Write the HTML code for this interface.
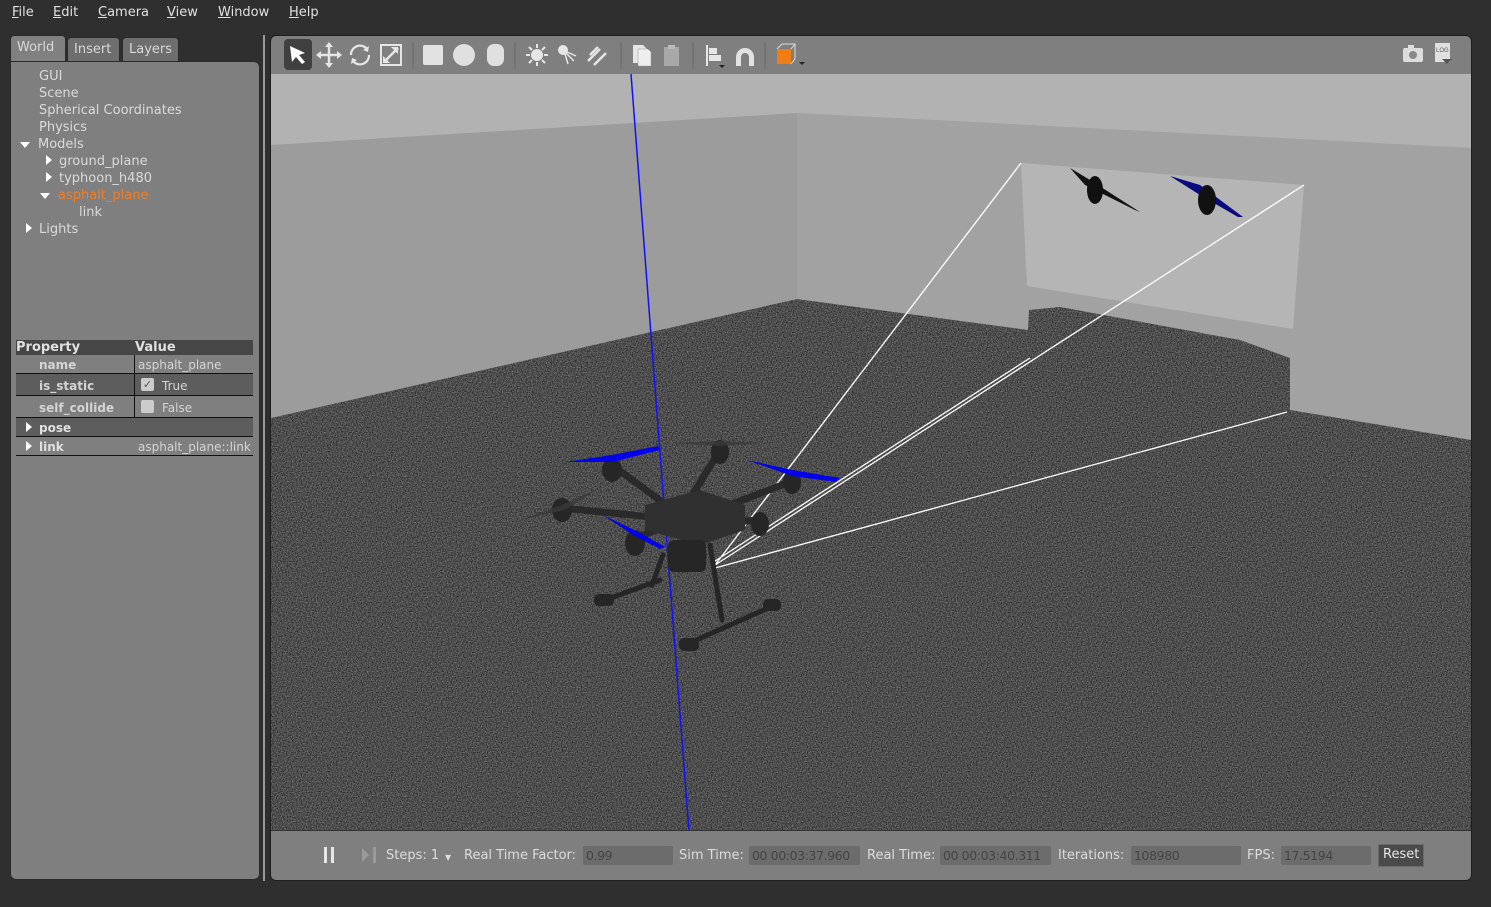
<!DOCTYPE html>
<html><head><meta charset="utf-8"><style>
*{margin:0;padding:0;box-sizing:border-box}
body{width:1491px;height:907px;background:#2f2f2f;font-family:"DejaVu Sans","Liberation Sans",sans-serif;font-size:13px;color:#dcdcdc;position:relative;overflow:hidden}
.abs{position:absolute}
.menu span{position:absolute;top:5px;font-size:13px;color:#e0e0e0}
.tab{position:absolute;top:37px;height:24px;border:1px solid #2a2a2a;border-bottom:none;border-radius:4px 4px 0 0;padding:4px 6px;font-size:13px;color:#d8d8d8;background:#6e6e6e}
.tree div{position:absolute;font-size:13px;color:#dadada;white-space:nowrap}
.tri-r{display:inline-block;width:0;height:0;border-top:5px solid transparent;border-bottom:5px solid transparent;border-left:6px solid #fff}
.tri-d{display:inline-block;width:0;height:0;border-left:5px solid transparent;border-right:5px solid transparent;border-top:6px solid #fff}
.pt div{position:absolute;font-size:12px;white-space:nowrap}
.bb span{position:absolute;top:848px;font-size:13px;color:#dcdcdc;white-space:nowrap}
.box{position:absolute;top:846px;height:19px;background:#6c6c6c;border-radius:2px;color:#444;font-size:12.5px;padding:2px 3px;white-space:nowrap;overflow:hidden;letter-spacing:-0.4px}
</style></head><body>
<div class="menu">
<span style="left:12px"><u>F</u>ile</span><span style="left:53px"><u>E</u>dit</span><span style="left:98px"><u>C</u>amera</span><span style="left:167px"><u>V</u>iew</span><span style="left:218px"><u>W</u>indow</span><span style="left:289px"><u>H</u>elp</span>
</div>
<div class="tab" style="left:10px;top:35px;height:27px;background:#808080;width:56px">World</div>
<div class="tab" style="left:67px;width:53px">Insert</div>
<div class="tab" style="left:122px;width:57px">Layers</div>
<div class="abs" style="left:10px;top:61px;width:250px;height:819px;background:#7f7f7f;border-radius:0 6px 6px 6px;border:1px solid #2a2a2a"></div>
<div class="tree">
<div style="left:39px;top:69px">GUI</div>
<div style="left:39px;top:86px">Scene</div>
<div style="left:39px;top:103px">Spherical Coordinates</div>
<div style="left:39px;top:120px">Physics</div>
<div style="left:20px;top:137px"><span class="tri-d" style="margin-right:8px;vertical-align:middle"></span>Models</div>
<div style="left:46px;top:154px"><span class="tri-r" style="margin-right:7px"></span>ground_plane</div>
<div style="left:46px;top:171px"><span class="tri-r" style="margin-right:7px"></span>typhoon_h480</div>
<div style="left:40px;top:188px;color:#f07e25"><span class="tri-d" style="margin-right:8px;vertical-align:middle"></span>asphalt_plane</div>
<div style="left:79px;top:205px">link</div>
<div style="left:26px;top:222px"><span class="tri-r" style="margin-right:7px"></span>Lights</div>
</div>
<div class="abs" style="left:16px;top:340px;width:237px;height:15px;background:#464646"></div>
<div class="abs" style="left:16px;top:374px;width:237px;height:21px;background:#5d5d5d"></div>
<div class="abs" style="left:16px;top:418px;width:237px;height:18px;background:#5d5d5d"></div>
<div class="abs" style="left:16px;top:373px;width:237px;height:1px;background:#111"></div>
<div class="abs" style="left:16px;top:395px;width:237px;height:1px;background:#111"></div>
<div class="abs" style="left:16px;top:417px;width:237px;height:1px;background:#111"></div>
<div class="abs" style="left:16px;top:436px;width:237px;height:1px;background:#111"></div>
<div class="abs" style="left:16px;top:455px;width:237px;height:1px;background:#111"></div>
<div class="abs" style="left:134px;top:355px;width:1px;height:62px;background:#111"></div>
<div class="abs" style="left:141px;top:378px;width:13px;height:13px;background:#ccc;border-radius:2px;font-size:11px;color:#555;line-height:13px;text-align:center">✓</div>
<div class="abs" style="left:141px;top:400px;width:13px;height:13px;background:#ccc;border-radius:2px"></div>
<div class="pt">
<div style="left:16px;top:340px;font-weight:bold;color:#e0e0e0;font-size:13px">Property</div>
<div style="left:135px;top:340px;font-weight:bold;color:#e0e0e0;font-size:13px">Value</div>
<div style="left:39px;top:358px;font-weight:bold;color:#d4d4d4">name</div>
<div style="left:138px;top:358px;color:#d4d4d4">asphalt_plane</div>
<div style="left:39px;top:379px;font-weight:bold;color:#d4d4d4">is_static</div>
<div style="left:162px;top:379px;color:#d4d4d4">True</div>
<div style="left:39px;top:401px;font-weight:bold;color:#d4d4d4">self_collide</div>
<div style="left:162px;top:401px;color:#d4d4d4">False</div>
<div style="left:26px;top:421px;font-weight:bold;color:#e0e0e0"><span class="tri-r" style="margin-right:7px"></span>pose</div>
<div style="left:26px;top:440px;font-weight:bold;color:#e0e0e0"><span class="tri-r" style="margin-right:7px"></span>link</div>
<div style="left:138px;top:440px;color:#d4d4d4">asphalt_plane::link</div>
</div>
<div class="abs" style="left:263px;top:35px;width:2px;height:846px;background:#9a9a9a"></div>
<div class="abs" style="left:270px;top:35px;width:1202px;height:846px;background:#7f7f7f;border-radius:6px;border:1px solid #1e1e1e"></div>
<svg class="abs" style="left:270px;top:35px" width="1202" height="39">
<rect x="14" y="4" width="28" height="31" rx="4" fill="#404040"/>
<path d="M20 11 L35 18 L29 20 L35 27 L32 29 L26 22 L22 27 Z" fill="#fff"/>
<g fill="#e6e6e6" stroke="#e6e6e6">
<path d="M59 10 V30 M49 20 H69" stroke-width="2.5"/>
<path d="M59 7 L55 12 H63Z M59 33 L55 28 H63Z M46 20 L51 16 V24Z M72 20 L67 16 V24Z" stroke="none"/>
<path d="M81 20 A9 9 0 0 1 97 14 M99 20 A9 9 0 0 1 83 26" fill="none" stroke-width="2.2"/>
<path d="M99 11 L98 17 L93 15Z M81 29 L82 23 L87 25Z" stroke="none"/>
<path d="M111 10 H131 V30 H111Z" fill="none" stroke-width="2"/>
<path d="M114 27 L128 13" stroke-width="2.5"/>
<path d="M128 12 L128 19 L121 12Z M113 28 L113 21 L120 28Z" stroke="none"/>
</g>
<line x1="143" y1="6" x2="143" y2="34" stroke="#6a6a6a"/>
<rect x="153" y="10" width="20" height="20" rx="2" fill="#e2e2e2"/>
<circle cx="194" cy="20" r="11" fill="#e0e0e0"/>
<rect x="217" y="9" width="17" height="22" rx="7" fill="#e0e0e0"/>
<line x1="245" y1="6" x2="245" y2="34" stroke="#6a6a6a"/>
<g stroke="#e6e6e6" stroke-width="2">
<circle cx="267" cy="20" r="5" fill="#e6e6e6"/>
<path d="M267 9v4M267 27v4M256 20h4M274 20h4M259 12l3 3M272 25l3 3M259 28l3-3M272 15l3-3"/>
<circle cx="293" cy="15" r="5" fill="#e6e6e6" stroke="none"/>
<path d="M296 18l8 8M297 17l9 4M295 19l3 10" stroke-width="1.5"/>
<path d="M318 26l12-12M324 30l12-12M320 20l8-8" stroke-width="2.5"/>
</g>
<line x1="351" y1="6" x2="351" y2="34" stroke="#6a6a6a"/>
<path d="M363 10h10l4 4v14h-14z" fill="#e6e6e6"/><path d="M368 14h10l3 3v14h-13z" fill="#eee" stroke="#999" stroke-width=".5"/>
<path d="M394 12h15v19h-15z" fill="#a8a8a8"/><path d="M398 10h7v4h-7z" fill="#bbb"/>
<line x1="423" y1="6" x2="423" y2="34" stroke="#6a6a6a"/>
<path d="M437 10v21M440 14h6v4h-6zM440 21h10v4h-10z" stroke="#e6e6e6" stroke-width="2" fill="#e6e6e6"/>
<path d="M449 30l3 3 3-3z" fill="#222"/>
<path d="M466 31v-9a9 9 0 0 1 18 0v9h-5v-9a4 4 0 0 0-8 0v9z" fill="#e2e2e2"/>
<line x1="495" y1="6" x2="495" y2="34" stroke="#6a6a6a"/>
<rect x="507" y="14" width="14" height="15" fill="#f07e14"/>
<path d="M507 14l5-5h13v15l-4 5M521 14l4-5" fill="none" stroke="#ddd" stroke-width="1"/>
<path d="M529 27l3 3 3-3z" fill="#222"/>
<rect x="1133" y="13" width="20" height="14" rx="2" fill="#ddd"/><circle cx="1143" cy="20" r="4" fill="#888"/><rect x="1138" y="10" width="6" height="4" fill="#ddd"/>
<rect x="1165" y="8" width="15" height="19" fill="#e0e0e0"/><text x="1166" y="17" font-size="6" fill="#555" font-family="Liberation Sans">LOG</text><path d="M1172 24l5 5 5-5z" fill="#555"/>
</svg>
<svg class="abs" style="left:271px;top:74px" width="1200" height="757" viewBox="271 74 1200 757">
<defs>
<filter id="n" x="0" y="0" width="100%" height="100%" color-interpolation-filters="sRGB">
<feTurbulence type="fractalNoise" baseFrequency="0.8" numOctaves="2" seed="3"/>
<feColorMatrix values="0.55 0 0 0 0.03  0.55 0 0 0 0.03  0.55 0 0 0 0.03  0 0 0 0 1"/>
<feComposite in2="SourceGraphic" operator="in"/>
</filter>
</defs>
<rect x="271" y="74" width="1200" height="757" fill="#b2b2b2"/>
<polygon points="271,145 797,113 1471,148 1471,440 1290,410 1290,358 1240,340 1060,307 1029,310 1028,330 797,299 271,418" fill="#9c9c9c"/>
<polygon points="797,113 1471,148 1471,440 1290,410 1290,358 1240,340 1060,307 1029,310 1028,330 797,299" fill="#a2a2a2"/>
<polygon points="271,418 797,299 1028,330 1029,310 1060,307 1240,340 1290,358 1290,410 1471,440 1471,831 271,831" fill="#4e4e4e" filter="url(#n)"/>
<polygon points="1021,163 1304,185 1293,329 1027,286" fill="#b5b5b5"/>
<g fill="#111">
<ellipse cx="1095" cy="190" rx="8" ry="14"/><path d="M1070 168 L1090 180 L1140 212 L1135 210 L1085 185Z"/>
</g>
<path d="M1170 176 L1200 185 L1243 217 L1238 217 L1200 195Z" fill="#0a0a80"/>
<ellipse cx="1207" cy="200" rx="9" ry="15" fill="#111"/>
<g stroke="#fff" stroke-width="1.3" fill="none">
<line x1="715" y1="565" x2="1021" y2="163"/>
<line x1="715" y1="565" x2="1304" y2="185"/>
<line x1="715" y1="568" x2="1287" y2="412"/>
<line x1="712" y1="563" x2="1030" y2="358"/>
</g>
<line x1="631" y1="74" x2="689" y2="831" stroke="#1010ff" stroke-width="1.5"/>
<g stroke="#2a2a2a" stroke-width="7" stroke-linecap="round" fill="none">
<line x1="680" y1="515" x2="612" y2="465"/>
<line x1="680" y1="515" x2="720" y2="450"/>
<line x1="690" y1="520" x2="790" y2="482"/>
<line x1="680" y1="520" x2="562" y2="508"/>
<line x1="690" y1="525" x2="760" y2="520"/>
<line x1="670" y1="525" x2="630" y2="540"/>
</g>
<g stroke="#262626" stroke-width="5" stroke-linecap="round">
<line x1="663" y1="555" x2="652" y2="585"/><line x1="600" y1="602" x2="660" y2="580"/>
<line x1="710" y1="545" x2="722" y2="620"/><line x1="685" y1="645" x2="775" y2="605"/>
</g>
<g fill="#262626">
<rect x="594" y="594" width="20" height="12" rx="5"/><rect x="763" y="599" width="18" height="12" rx="5"/><rect x="679" y="638" width="20" height="13" rx="5"/>
<path d="M645 505 L700 490 L745 505 L745 530 L700 545 L645 530Z" fill="#303030"/>
<rect x="668" y="540" width="38" height="32" rx="6"/>
<ellipse cx="612" cy="470" rx="10" ry="12"/><ellipse cx="720" cy="452" rx="9" ry="12"/><ellipse cx="792" cy="482" rx="9" ry="12"/><ellipse cx="562" cy="510" rx="10" ry="12"/><ellipse cx="760" cy="524" rx="9" ry="12"/><ellipse cx="635" cy="543" rx="10" ry="13"/>
</g>
<g fill="#0000ee">
<path d="M565 462 L612 455 L658 446 L660 450 L612 462Z"/>
<path d="M747 460 L792 470 L840 478 L836 482 L792 476Z"/>
<path d="M603 515 L640 533 L665 547 L660 549 L633 535Z"/>
</g>
<g fill="#3a3a3a" opacity=".8">
<path d="M670 443 L720 441 L765 443 L720 446Z"/><path d="M520 520 L562 505 L600 488 L565 510Z"/>
</g>
</svg>
<div class="abs" style="left:271px;top:830px;width:1200px;height:1px;background:#333"></div>
<div class="abs" style="left:324px;top:847px;width:3px;height:16px;background:#e6e6e6"></div>
<div class="abs" style="left:331px;top:847px;width:3px;height:16px;background:#e6e6e6"></div>
<svg class="abs" style="left:361px;top:847px" width="16" height="16"><path d="M1 1 L8 8 L1 15Z" fill="#9a9a9a"/><rect x="12" y="0" width="3" height="16" fill="#9a9a9a"/></svg>
<div class="bb">
<span style="left:386px">Steps: 1</span>
<span style="left:445px;top:853px;font-size:8px">▼</span>
<span style="left:464px">Real Time Factor:</span>
<span style="left:679px">Sim Time:</span>
<span style="left:867px">Real Time:</span>
<span style="left:1058px">Iterations:</span>
<span style="left:1247px">FPS:</span>
</div>
<div class="box" style="left:583px;width:90px">0.99</div>
<div class="box" style="left:749px;width:111px">00 00:03:37.960</div>
<div class="box" style="left:940px;width:111px">00 00:03:40.311</div>
<div class="box" style="left:1131px;width:110px">108980</div>
<div class="box" style="left:1281px;width:90px">17.5194</div>
<div class="abs" style="left:1378px;top:844px;width:46px;height:23px;background:#4a4a4a;border:1px solid #6a6a6a;color:#e6e6e6;font-size:13px;padding:2px 4px">Reset</div>
</body></html>
